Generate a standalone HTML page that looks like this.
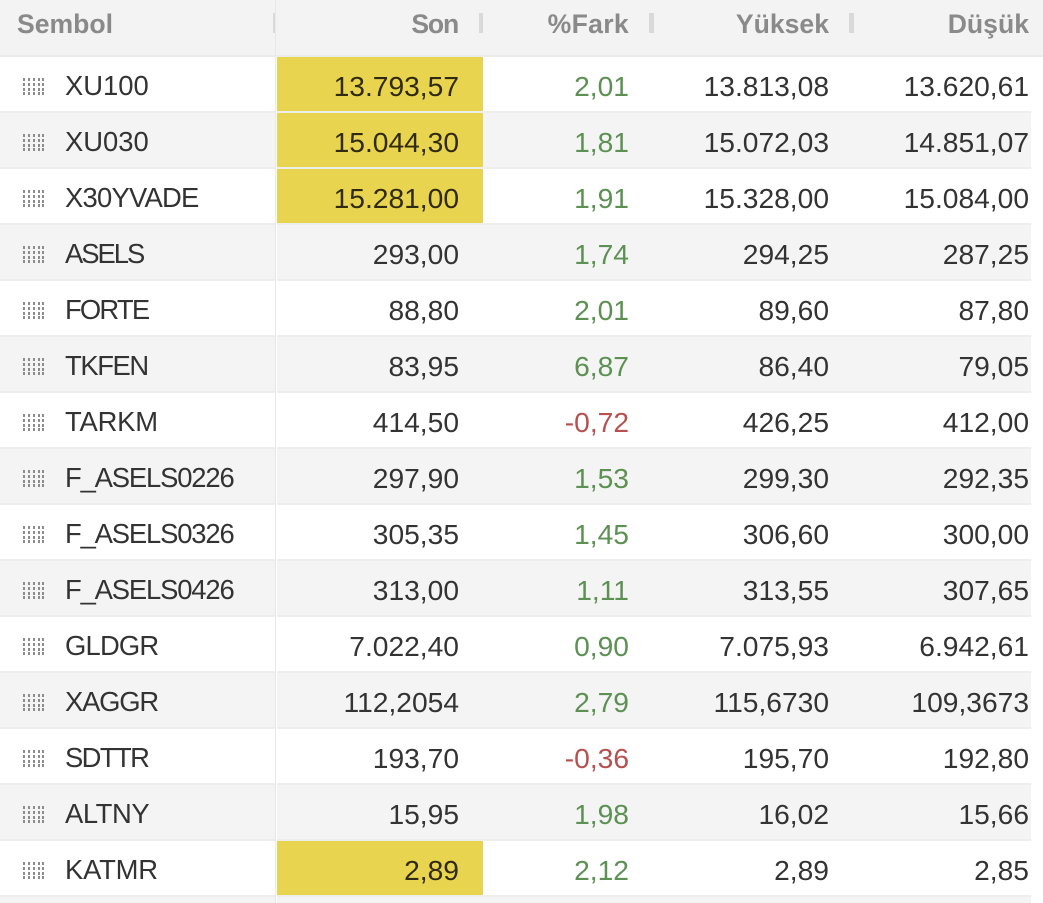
<!DOCTYPE html>
<html lang="tr">
<head>
<meta charset="utf-8">
<title>Sembol</title>
<style>
html,body{margin:0;padding:0;background:#fff;width:1043px;height:903px;overflow:hidden}
body{position:relative;font-family:"Liberation Sans",sans-serif;color:#333}
.head{position:absolute;left:0;top:0;width:1043px;height:55px;background:#f3f3f3;border-bottom:2px solid #ebebeb}
.h{position:absolute;top:7px;height:34px;line-height:34px;font-size:26.6px;font-weight:700;color:#8a8a8a;text-align:right;white-space:nowrap}
.bar{position:absolute;top:13px;height:20px;background:#d9d9d9}
.row{position:absolute;left:0;width:1031px;height:54px;border-bottom:2px solid #eeeeee;background:#fff}
.row.g{background:#f4f4f4}
.c{position:absolute;top:0;height:54px;line-height:58px;font-size:28.2px;white-space:nowrap;text-align:right}
.s{left:65px;text-align:left;font-size:27.4px}
.a{width:206px;left:277px;padding:0;box-sizing:border-box;padding-right:24px}
.b{left:483px;width:146px}
.d{left:629px;width:200px}
.e{left:829px;width:200px}
.y{background:#e8d44f;color:#2f2a10}
.up{color:#5c9153}
.dn{color:#b5524f}
.sep{position:absolute;left:275px;top:0;width:1px;height:903px;background:#e8e8e8}
.sep2{position:absolute;left:276px;top:57px;width:1px;height:846px;background:#fff}
svg.k{position:absolute;left:23px;top:21px;width:21px;height:18px}
</style>
</head>
<body>
<svg width="0" height="0" style="position:absolute"><defs><g id="k" fill="#8c8c8c"><rect x="0" y="0" width="2" height="3"/><rect x="5" y="0" width="2" height="3"/><rect x="10" y="0" width="2" height="3"/><rect x="15" y="0" width="2" height="3"/><rect x="19" y="0" width="2" height="3"/><rect x="0" y="5" width="2" height="3"/><rect x="5" y="5" width="2" height="3"/><rect x="10" y="5" width="2" height="3"/><rect x="15" y="5" width="2" height="3"/><rect x="19" y="5" width="2" height="3"/><rect x="0" y="10" width="2" height="3"/><rect x="5" y="10" width="2" height="3"/><rect x="10" y="10" width="2" height="3"/><rect x="15" y="10" width="2" height="3"/><rect x="19" y="10" width="2" height="3"/><rect x="0" y="14" width="2" height="3"/><rect x="5" y="14" width="2" height="3"/><rect x="10" y="14" width="2" height="3"/><rect x="15" y="14" width="2" height="3"/><rect x="19" y="14" width="2" height="3"/></g></defs></svg>

<div class="head">
<div class="h" style="left:17px">Sembol</div>
<div class="bar" style="left:273px;width:2px"></div>
<div class="h" style="left:300px;width:158px;letter-spacing:-1.2px">Son</div>
<div class="bar" style="left:479px;width:4px"></div>
<div class="h" style="left:500px;width:129px;letter-spacing:.3px">%Fark</div>
<div class="bar" style="left:649px;width:5px"></div>
<div class="h" style="left:670px;width:159px">Yüksek</div>
<div class="bar" style="left:849px;width:5px"></div>
<div class="h" style="left:870px;width:159px">Düşük</div>
</div>

<div class="row" style="top:57px"><svg class="k"><use href="#k"/></svg><div class="c s">XU100</div><div class="c a y">13.793,57</div><div class="c b up">2,01</div><div class="c d">13.813,08</div><div class="c e">13.620,61</div></div>
<div class="row g" style="top:113px"><svg class="k"><use href="#k"/></svg><div class="c s">XU030</div><div class="c a y">15.044,30</div><div class="c b up">1,81</div><div class="c d">15.072,03</div><div class="c e">14.851,07</div></div>
<div class="row" style="top:169px"><svg class="k"><use href="#k"/></svg><div class="c s" style="letter-spacing:-.75px">X30YVADE</div><div class="c a y">15.281,00</div><div class="c b up">1,91</div><div class="c d">15.328,00</div><div class="c e">15.084,00</div></div>
<div class="row g" style="top:225px"><svg class="k"><use href="#k"/></svg><div class="c s" style="letter-spacing:-2px">ASELS</div><div class="c a">293,00</div><div class="c b up">1,74</div><div class="c d">294,25</div><div class="c e">287,25</div></div>
<div class="row" style="top:281px"><svg class="k"><use href="#k"/></svg><div class="c s" style="letter-spacing:-1.8px">FORTE</div><div class="c a">88,80</div><div class="c b up">2,01</div><div class="c d">89,60</div><div class="c e">87,80</div></div>
<div class="row g" style="top:337px"><svg class="k"><use href="#k"/></svg><div class="c s" style="letter-spacing:-1.4px">TKFEN</div><div class="c a">83,95</div><div class="c b up">6,87</div><div class="c d">86,40</div><div class="c e">79,05</div></div>
<div class="row" style="top:393px"><svg class="k"><use href="#k"/></svg><div class="c s" style="letter-spacing:-.2px">TARKM</div><div class="c a">414,50</div><div class="c b dn">-0,72</div><div class="c d">426,25</div><div class="c e">412,00</div></div>
<div class="row g" style="top:449px"><svg class="k"><use href="#k"/></svg><div class="c s" style="letter-spacing:-1.15px">F_ASELS0226</div><div class="c a">297,90</div><div class="c b up">1,53</div><div class="c d">299,30</div><div class="c e">292,35</div></div>
<div class="row" style="top:505px"><svg class="k"><use href="#k"/></svg><div class="c s" style="letter-spacing:-1.15px">F_ASELS0326</div><div class="c a">305,35</div><div class="c b up">1,45</div><div class="c d">306,60</div><div class="c e">300,00</div></div>
<div class="row g" style="top:561px"><svg class="k"><use href="#k"/></svg><div class="c s" style="letter-spacing:-1.15px">F_ASELS0426</div><div class="c a">313,00</div><div class="c b up">1,11</div><div class="c d">313,55</div><div class="c e">307,65</div></div>
<div class="row" style="top:617px"><svg class="k"><use href="#k"/></svg><div class="c s" style="letter-spacing:-.8px">GLDGR</div><div class="c a">7.022,40</div><div class="c b up">0,90</div><div class="c d">7.075,93</div><div class="c e">6.942,61</div></div>
<div class="row g" style="top:673px"><svg class="k"><use href="#k"/></svg><div class="c s" style="letter-spacing:-1.2px">XAGGR</div><div class="c a">112,2054</div><div class="c b up">2,79</div><div class="c d">115,6730</div><div class="c e">109,3673</div></div>
<div class="row" style="top:729px"><svg class="k"><use href="#k"/></svg><div class="c s" style="letter-spacing:-1.6px">SDTTR</div><div class="c a">193,70</div><div class="c b dn">-0,36</div><div class="c d">195,70</div><div class="c e">192,80</div></div>
<div class="row g" style="top:785px"><svg class="k"><use href="#k"/></svg><div class="c s" style="letter-spacing:-.4px">ALTNY</div><div class="c a">15,95</div><div class="c b up">1,98</div><div class="c d">16,02</div><div class="c e">15,66</div></div>
<div class="row" style="top:841px"><svg class="k"><use href="#k"/></svg><div class="c s" style="letter-spacing:-.2px">KATMR</div><div class="c a y">2,89</div><div class="c b up">2,12</div><div class="c d">2,89</div><div class="c e">2,85</div></div>
<div class="row g" style="top:897px;height:6px;border-bottom:0"></div>
<div class="sep"></div>
<div class="sep2"></div>
</body>
</html>
